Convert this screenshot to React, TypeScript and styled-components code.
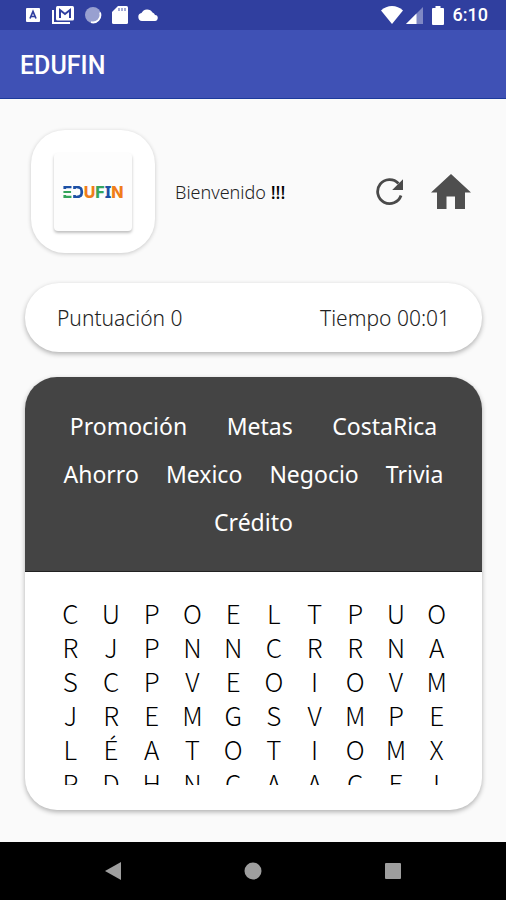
import React from "react";
import styled, { createGlobalStyle } from "styled-components";

const GlobalStyle = createGlobalStyle`
  *, *::before, *::after { box-sizing: border-box; }
  body {
    margin: 0;
    background: #fafafa;
    color: #222;
    font-family: "Noto Sans", "Open Sans", sans-serif;
    font-weight: 300;
  }
  button {
    padding: 0;
    border: 0;
    background: none;
    color: inherit;
    font: inherit;
    cursor: pointer;
  }
  svg { display: block; }
`;

const Screen = styled.div`
  display: flex;
  flex-direction: column;
  height: 100vh;
`;

const StatusBar = styled.div`
  display: flex;
  align-items: center;
  justify-content: space-between;
  height: 30px;
  padding: 0 18px 0 24px;
  background: #303f9f;
  color: #fff;
`;

const StatusGroup = styled.div<{ $gap: number }>`
  display: flex;
  align-items: center;
  gap: ${({ $gap }) => $gap}px;
`;

const Clock = styled.time`
  font: 500 18px/24px Roboto, sans-serif;
`;

const AppBar = styled.header`
  display: flex;
  align-items: center;
  height: 69px;
  padding: 4px 20px 0;
  background: #3f51b5;
  border-bottom: 1px solid #1c3a9c;
`;

const AppTitle = styled.h1`
  margin: 0;
  color: #fff;
  font: 500 25px/32px Roboto, sans-serif;
`;

const Main = styled.main`
  display: flex;
  flex: 1;
  flex-direction: column;
  min-height: 0;
  padding: 31px 24px 32px 25px;
`;

const Welcome = styled.section`
  display: flex;
  align-items: center;
  padding: 0 11px 0 6px;
`;

const LogoCard = styled.div`
  display: grid;
  place-items: center;
  width: 124px;
  height: 123px;
  border-radius: 34px;
  background: #fff;
  box-shadow: 0 1px 4px rgba(0, 0, 0, 0.2);
`;

const LogoTile = styled.div`
  display: grid;
  place-items: center;
  width: 78px;
  height: 78px;
  border-radius: 4px;
  background: #fdfdfd;
  box-shadow: 0 2px 3px rgba(0, 0, 0, 0.25);
`;

const Wordmark = styled.span`
  display: flex;
  font: 800 16px/20px Inter, sans-serif;
`;

const WordmarkLetter = styled.span<{ $color: string; $slab?: boolean }>`
  color: ${({ $color }) => $color};
  font-family: ${({ $slab }) => ($slab ? '"Noto Sans"' : "Inter")}, sans-serif;
`;

const StripedLetter = styled.span`
  background: linear-gradient(
    #1d50a5 0 7px,
    transparent 7px 9px,
    #35a45b 9px 11px,
    transparent 11px 13px,
    #35a45b 13px
  );
  background-clip: text;
  color: transparent;
`;

const OpenLetter = styled.span`
  background:
    linear-gradient(#1d50a5 0 7px, transparent 7px 13px, #1d50a5 13px),
    linear-gradient(90deg, transparent 5px, #1d50a5 5px);
  background-clip: text;
  color: transparent;
`;

const Greeting = styled.p`
  flex: 1;
  margin: 0 0 0 20px;
  font-size: 18px;
  line-height: 24px;
`;

const Bangs = styled.span`
  font-weight: 500;
  color: #000;
`;

const Actions = styled.div`
  display: flex;
  align-items: center;
  gap: 27px;
  color: #4a4a4a;
`;

const ScoreCard = styled.section`
  display: flex;
  flex: none;
  align-items: center;
  justify-content: space-between;
  height: 69px;
  margin-top: 30px;
  padding: 0 32px;
  border-radius: 34px;
  background: #fff;
  box-shadow: 0 2px 5px rgba(0, 0, 0, 0.3);
  font-size: 21px;
  line-height: 28px;
`;

const Board = styled.section`
  display: flex;
  flex: 1;
  flex-direction: column;
  min-height: 0;
  margin-top: 25px;
  border-radius: 32px;
  background: #fff;
  box-shadow: 0 2px 5px rgba(0, 0, 0, 0.3);
  overflow: hidden;
`;

const WordList = styled.ul`
  display: flex;
  flex: none;
  flex-wrap: wrap;
  justify-content: space-around;
  margin: 0;
  padding: 25px;
  border-bottom: 1px solid #222;
  background: #444;
  color: #fff;
  font-size: 23px;
  font-weight: 400;
  line-height: 48px;
  list-style: none;
`;

const Word = styled.li`
  margin: 0 9px;
`;

const LetterGrid = styled.div`
  display: grid;
  flex: 1;
  grid-template-columns: repeat(10, 1fr);
  grid-auto-rows: 34px;
  align-content: start;
  min-height: 0;
  margin: 24px 25px 25px;
  overflow: hidden;
  color: #000;
  font-family: "Noto Sans CJK JP", "Noto Sans", sans-serif;
  font-size: 26px;
  font-weight: 300;
`;

const LetterCell = styled.button`
  line-height: 34px;
`;

const NavBar = styled.nav`
  display: grid;
  flex: none;
  grid-template-columns: repeat(3, 140px);
  place-content: center;
  place-items: center;
  height: 58px;
  background: #000;
  color: #9e9e9e;
`;

const words = [
  "Promoción",
  "Metas",
  "CostaRica",
  "Ahorro",
  "Mexico",
  "Negocio",
  "Trivia",
  "Crédito",
];

const rows = [
  "CUPOELTPUO",
  "RJPNNCRRNA",
  "SCPVEOIOVM",
  "JREMGSVMPE",
  "LÉATOTIOMX",
  "PDHNCAACEI",
];

const KeyboardIcon = () => (
  <svg width="18" height="18" viewBox="0 0 18 18">
    <rect x="2" y="2" width="14" height="14" rx="1" fill="#fff" />
    <path d="M6 12.5 9 5.5l3 7M7 10.5h4" fill="none" stroke="#303f9f" strokeWidth="1.7" />
  </svg>
);

const MailIcon = () => (
  <svg width="22" height="20" viewBox="0 0 22 20">
    <path d="M1 5v13h17" fill="none" stroke="#fff" strokeWidth="2" />
    <rect x="4" y="1" width="18" height="14.5" rx="1.5" fill="#fff" />
    <path d="M8 13V5l5 4 5-4v8" fill="none" stroke="#303f9f" strokeWidth="2" />
  </svg>
);

const SyncIcon = () => (
  <svg width="18" height="18" viewBox="0 0 18 18">
    <circle cx="9" cy="9" r="8" fill="#98a0d0" />
    <path d="M16 6.500A7.500 7.500 0 0 1 7 16.200" fill="none" stroke="#fff" strokeWidth="1.800" />
  </svg>
);

const SdCardIcon = () => (
  <svg width="16" height="18" viewBox="0 0 16 18">
    <path d="M6 0h8.500A1.500 1.500 0 0 1 16 1.500v15a1.500 1.500 0 0 1-1.500 1.500h-13A1.500 1.500 0 0 1 0 16.500V6z" fill="#fff" />
    <path d="M7 2v3M10 2v3M13 2v3" stroke="#7f88c4" strokeWidth="1.400" />
  </svg>
);

const CloudIcon = () => (
  <svg width="20" height="12" viewBox="0 0 20 12">
    <path d="M4 12a4 4 0 0 1-.5-7.900A6.200 6.200 0 0 1 14.500 3.500 3.600 3.600 0 0 1 17 6a3 3 0 0 1-.5 6z" fill="#fff" />
  </svg>
);

const WifiIcon = () => (
  <svg width="22" height="18" viewBox="0 0 22 18">
    <path d="M0 4.500C6-1.500 16-1.500 22 4.500L11 18z" fill="#fff" />
  </svg>
);

const SignalIcon = () => (
  <svg width="17" height="17" viewBox="0 0 17 17">
    <path d="M17 0v17H0z" fill="#7f88c4" />
    <path d="M10.500 6.500V17H0z" fill="#fff" />
  </svg>
);

const BatteryIcon = () => (
  <svg width="12" height="19" viewBox="0 0 12 19">
    <path d="M3.500 0h5v2H11a1 1 0 0 1 1 1v15a1 1 0 0 1-1 1H1a1 1 0 0 1-1-1V3a1 1 0 0 1 1-1h2.500z" fill="#fff" />
  </svg>
);

const RestartIcon = () => (
  <svg width="28" height="28" viewBox="0 0 28 28">
    <path d="M25 17.500A12 12 0 1 1 22.500 5.500" fill="none" stroke="currentColor" strokeWidth="2.800" />
    <path d="M27 1.200V12H16.200z" fill="currentColor" />
  </svg>
);

const HomeIcon = () => (
  <svg width="40" height="36" viewBox="0 0 40 36">
    <path d="M20 0 40 18.500H34V35H24V22.500H15.500V35H6V18.500H0z" fill="#4f4f4f" />
  </svg>
);

export default function App() {
  return (
    <Screen>
      <GlobalStyle />
      <StatusBar>
        <StatusGroup $gap={10}>
          <KeyboardIcon />
          <MailIcon />
          <SyncIcon />
          <SdCardIcon />
          <CloudIcon />
        </StatusGroup>
        <StatusGroup $gap={9}>
          <StatusGroup $gap={3}>
            <WifiIcon />
            <SignalIcon />
          </StatusGroup>
          <BatteryIcon />
          <Clock>6:10</Clock>
        </StatusGroup>
      </StatusBar>

      <AppBar>
        <AppTitle>EDUFIN</AppTitle>
      </AppBar>

      <Main>
        <Welcome>
          <LogoCard>
            <LogoTile>
              <Wordmark>
                <StripedLetter>E</StripedLetter>
                <OpenLetter>D</OpenLetter>
                <WordmarkLetter $color="#f07d1a">U</WordmarkLetter>
                <WordmarkLetter $color="#35a45b">F</WordmarkLetter>
                <WordmarkLetter $color="#1d50a5" $slab>
                  I
                </WordmarkLetter>
                <WordmarkLetter $color="#f07d1a">N</WordmarkLetter>
              </Wordmark>
            </LogoTile>
          </LogoCard>
          <Greeting>
            Bienvenido <Bangs>!!!</Bangs>
          </Greeting>
          <Actions>
            <button type="button" aria-label="Reiniciar">
              <RestartIcon />
            </button>
            <button type="button" aria-label="Inicio">
              <HomeIcon />
            </button>
          </Actions>
        </Welcome>

        <ScoreCard>
          <span>Puntuación 0</span>
          <span>Tiempo 00:01</span>
        </ScoreCard>

        <Board>
          <WordList>
            {words.map((word) => (
              <Word key={word}>{word}</Word>
            ))}
          </WordList>
          <LetterGrid>
            {rows.flatMap((row, r) =>
              [...row].map((letter, c) => (
                <LetterCell key={`${r}-${c}`} type="button">
                  {letter}
                </LetterCell>
              )),
            )}
          </LetterGrid>
        </Board>
      </Main>

      <NavBar>
        <button type="button" aria-label="Atrás">
          <svg width="16" height="18" viewBox="0 0 16 18">
            <path d="M16 0v18L0 9z" fill="currentColor" />
          </svg>
        </button>
        <button type="button" aria-label="Pantalla principal">
          <svg width="18" height="18" viewBox="0 0 18 18">
            <circle cx="9" cy="9" r="8.500" fill="currentColor" />
          </svg>
        </button>
        <button type="button" aria-label="Recientes">
          <svg width="16" height="16" viewBox="0 0 16 16">
            <rect width="16" height="16" rx="1" fill="currentColor" />
          </svg>
        </button>
      </NavBar>
    </Screen>
  );
}
